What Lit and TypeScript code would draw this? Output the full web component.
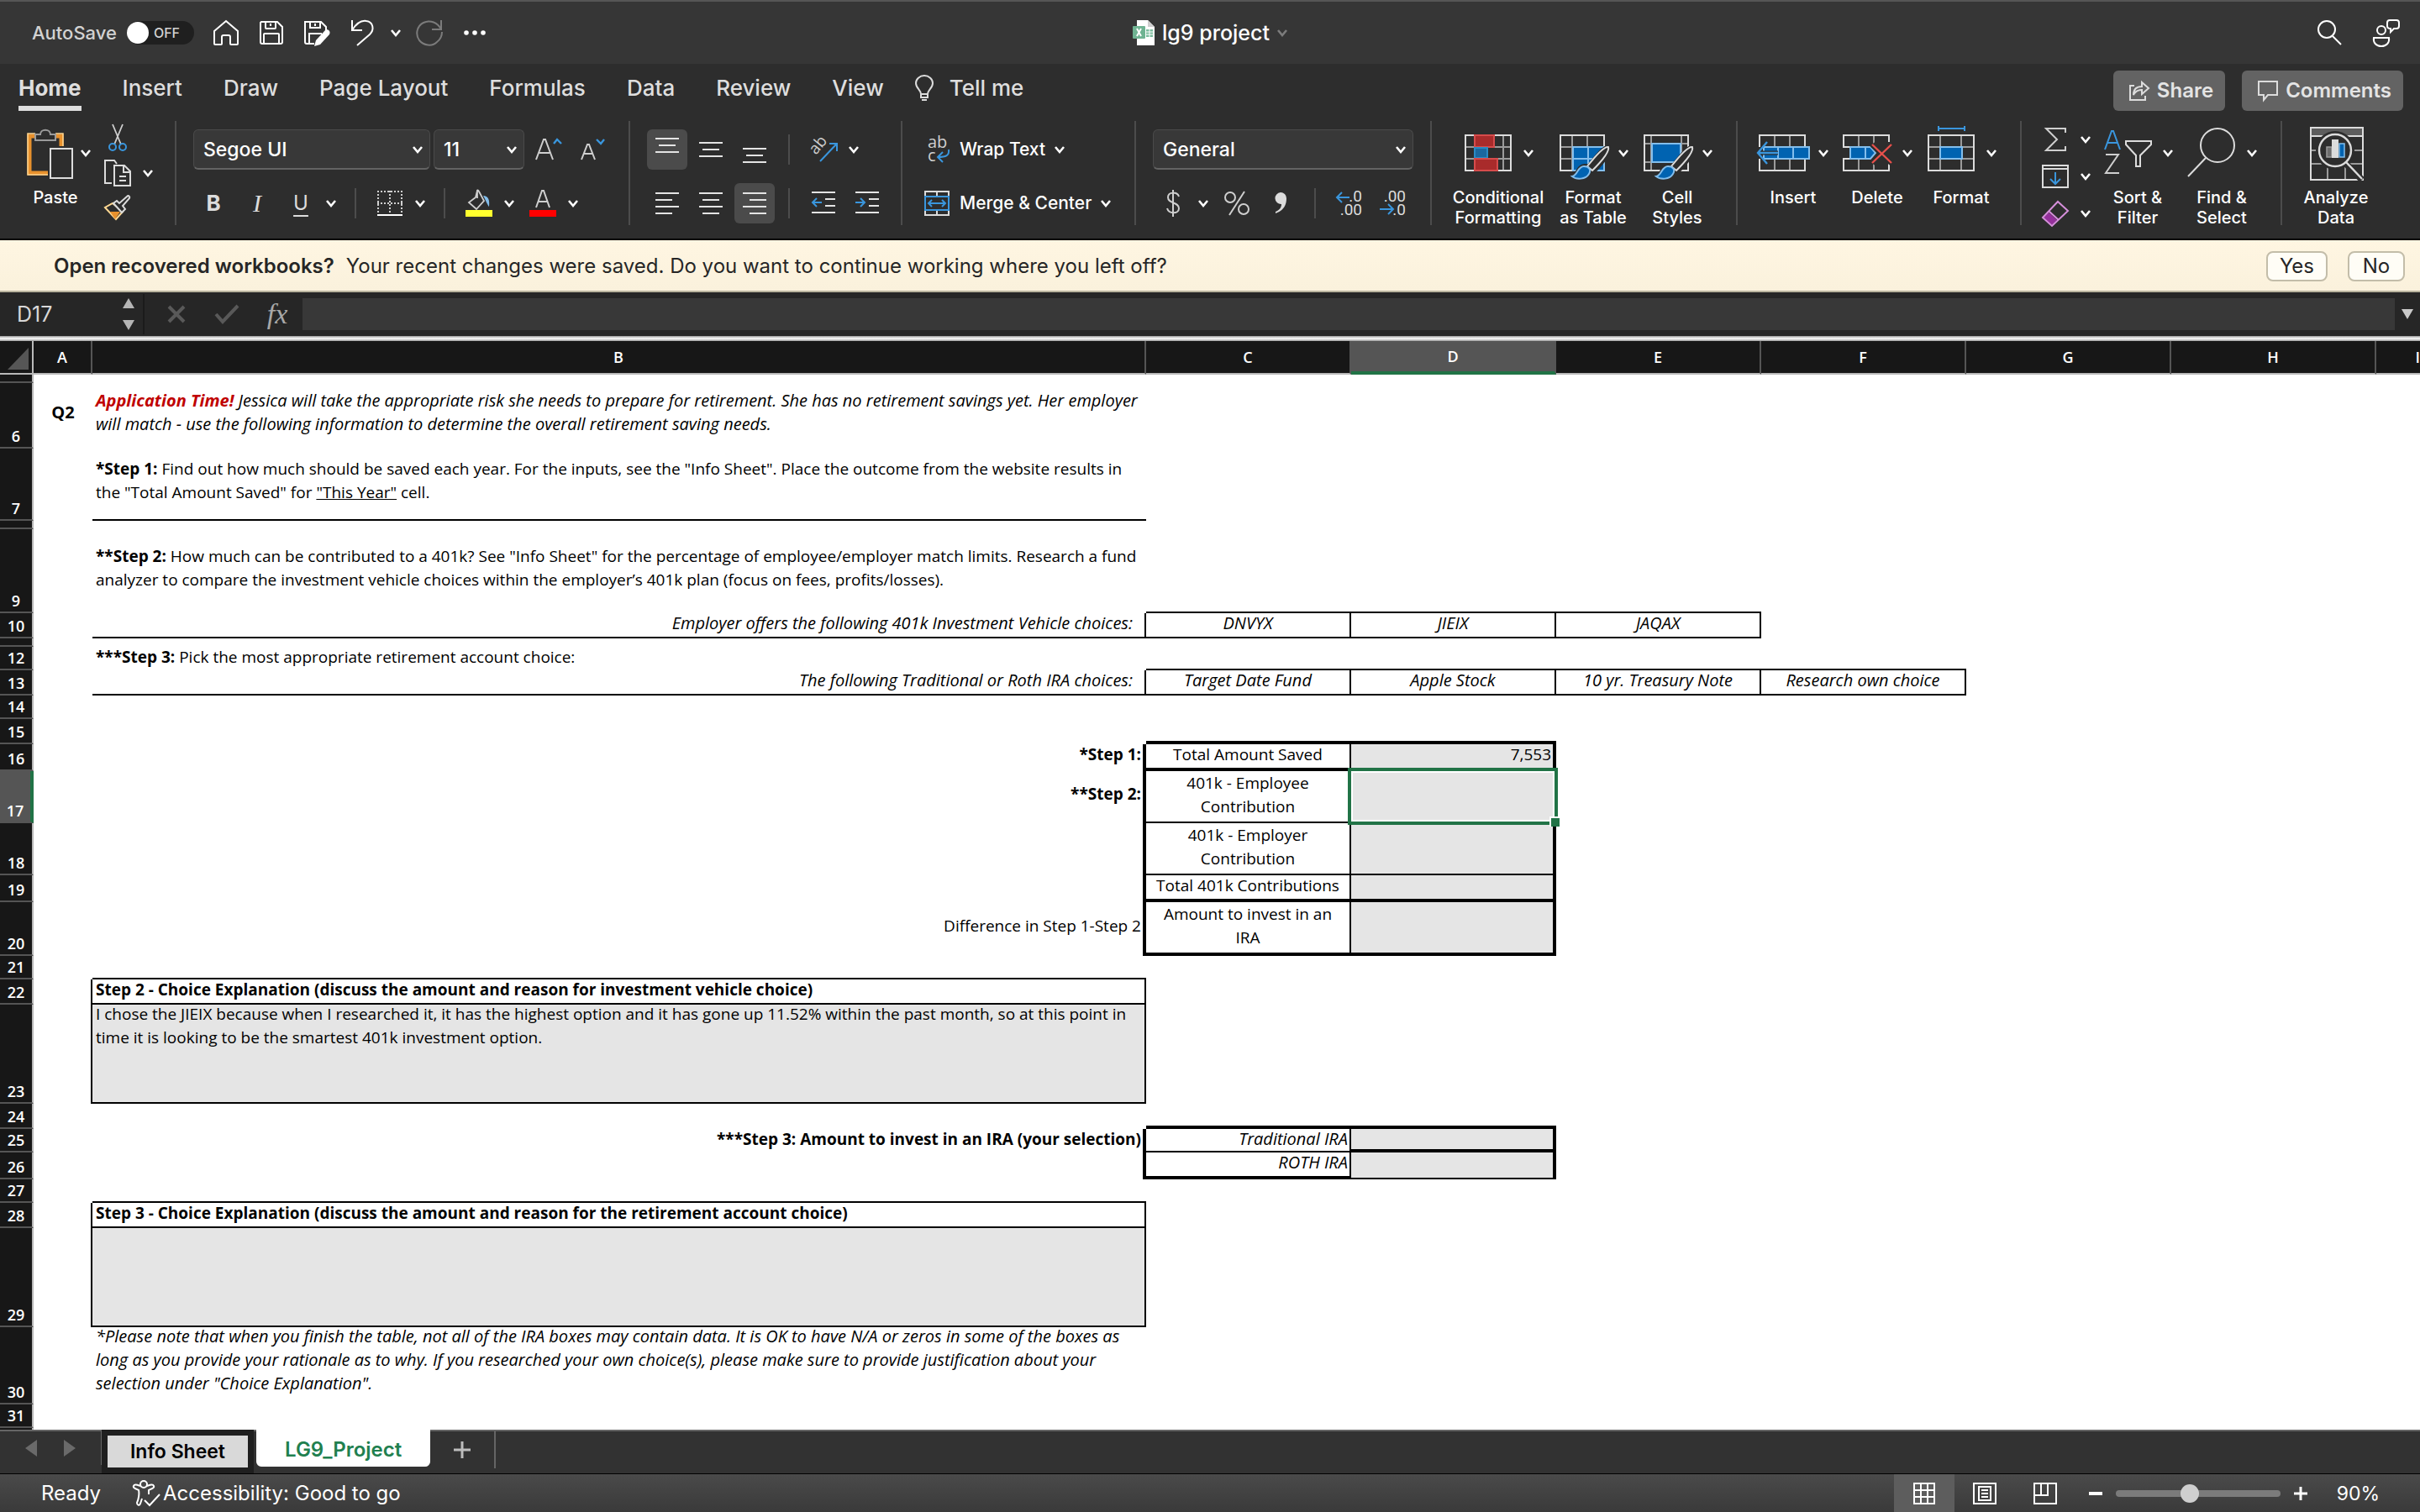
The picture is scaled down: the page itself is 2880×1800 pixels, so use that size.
import { LitElement, html, svg, css, nothing, TemplateResult } from "lit";
import { customElement, state } from "lit/decorators.js";
import { classMap } from "lit/directives/class-map.js";

type Content = TemplateResult | string;
interface Cell {
  cls?: string;
  text?: Content;
  selected?: boolean;
}
interface Row {
  n: string;
  h: number;
  cells?: Record<string, Cell>;
}

const icon = (w: number, h: number, body: unknown) =>
  html`<svg class="icon" width=${w} height=${h} viewBox="0 0 ${w} ${h}" fill="none" aria-hidden="true">${body}</svg>`;

const chevron = icon(14, 10, svg`<path d="M2 2l5 6 5-6" stroke="#fff" stroke-width="2.6"/>`);

const lines = (rows: number[][], h = 32) =>
  icon(32, h, rows.map(([x, y, w]) => svg`<rect x=${x} y=${y} width=${w} height="2" fill="#e4e4e4"/>`));

const grid = svg`
  <path d="M19 11v42M37 11v42M4 25h54M4 39h54" stroke="#9b9b9b" stroke-width="2"/>
  <rect x="5" y="11" width="52" height="42" stroke="#dcdcdc" stroke-width="2"/>`;

const brush = svg`
  <path d="M62 25c-5 0-13 10-24 24l6 6c10-11 22-24 18-30z" fill="#2d2d2d" stroke="#2d2d2d" stroke-width="5"/>
  <path d="M20 60c6 0 6-12 14-12 6 0 8 5 5 10-4 6-14 7-19 2z" fill="#0063b1" stroke="#2d2d2d" stroke-width="6"/>
  <path d="M62 25c-4-1-14 9-25 23l6 5C53 43 64 31 62 25z" fill="#2d2d2d" stroke="#dcdcdc" stroke-width="2"/>
  <path d="M19 60c7-1 6-12 14-12 6 0 9 4 6 9-4 7-15 7-20 3z" fill="#0063b1" stroke="#83beec" stroke-width="2"/>`;

const icons = {
  home: icon(32, 32, svg`<path d="M2 14L16 2l14 12v15a1 1 0 0 1-1 1h-7a1 1 0 0 1-1-1v-8a2 2 0 0 0-2-2h-6a2 2 0 0 0-2 2v8a1 1 0 0 1-1 1H3a1 1 0 0 1-1-1z" stroke="#fff" stroke-width="2"/>`),
  save: icon(32, 32, svg`<path d="M4 3h19l6 6v18a2 2 0 0 1-2 2H5a2 2 0 0 1-2-2V4zM9 3v7a1 1 0 0 0 1 1h10a1 1 0 0 0 1-1V3M7 29V18a1 1 0 0 1 1-1h16a1 1 0 0 1 1 1v11M15 5v3" stroke="#fff" stroke-width="2"/>`),
  saveEdit: icon(34, 34, svg`<path d="M14 30H5a2 2 0 0 1-2-2V4h19l6 6v4M9 4v7h12V4M8 30V18h15M15 6v3" stroke="#fff" stroke-width="2"/><path d="M14 33l2-7L27 14c3-2 7 1 5 5L21 31z" fill="#fff"/>`),
  undo: icon(30, 34, svg`<path d="M3 2v12h12M3 14C8 6 14 2 20 3c8 1 10 10 4 16L9 32" stroke="#fff" stroke-width="2"/>`),
  redo: icon(34, 34, svg`<path d="M31 2v11H20M31 13C27 5 18 1 10 5 2 9 0 19 5 26c5 6 15 8 21 2 4-3 6-8 6-12" stroke="#7b7b7b" stroke-width="2"/>`),
  dots: icon(28, 8, svg`<circle cx="4" cy="4" r="2.8" fill="#fff"/><circle cx="14" cy="4" r="2.8" fill="#fff"/><circle cx="24" cy="4" r="2.8" fill="#fff"/>`),
  workbook: icon(28, 30, svg`<path d="M6 0h13l8 8v22H6z" fill="#fff"/><path d="M19 0v8h8z" fill="#cfcfcf"/><rect x="17" y="11" width="8" height="9" fill="#7cbd9e"/><path d="M21 11v9M17 14h8M17 17h8" stroke="#fff" stroke-width="1"/><rect x="1" y="7" width="15" height="15" rx="1" fill="#6fb392"/><path d="M6 10l5 9M11 10l-5 9" stroke="#fff" stroke-width="2"/>`),
  search: icon(32, 32, svg`<circle cx="13" cy="12" r="10" stroke="#fff" stroke-width="2"/><path d="M20 20l10 10" stroke="#fff" stroke-width="2"/>`),
  person: icon(36, 34, svg`<circle cx="12" cy="14" r="5" stroke="#fff" stroke-width="2"/><path d="M3 23h18c1 6-3 10-9 10s-10-4-9-10zM22 2h8a3 3 0 0 1 3 3v4a3 3 0 0 1-3 3h-3l-4 4v-4c-3 0-4-1-4-3V5a3 3 0 0 1 3-3z" stroke="#fff" stroke-width="2"/>`),
  bulb: icon(24, 32, svg`<path d="M8 23c0-5-6-7-6-13a10 9 0 0 1 20 0c0 6-6 8-6 13v4H8zM8 23h8M9 30h6" stroke="#dcdcdc" stroke-width="2"/>`),
  share: icon(26, 26, svg`<path d="M7 7H2v17h18v-5M6 18c0-7 4-10 10-10V3l8 7-8 7v-5c-5 0-8 2-10 6z" stroke="#dcdcdc" stroke-width="2"/>`),
  comment: icon(26, 26, svg`<path d="M2 2h22v16H13l-5 6v-6H2z" stroke="#dcdcdc" stroke-width="2"/>`),
  paste: icon(64, 64, svg`<path d="M22 12H13v44h22M42 12h9v12" stroke="#e8912d" stroke-width="5"/><path d="M20 9H11v49h24M44 9h9v15" stroke="#ffd892" stroke-width="1.5"/><path d="M20 17V10h6c0-7 12-7 12 0h6v7z" fill="#2d2d2d" stroke="#9b9b9b" stroke-width="2"/><rect x="38" y="27" width="26" height="35" fill="#2d2d2d" stroke="#dcdcdc" stroke-width="2"/>`),
  cut: icon(24, 34, svg`<path d="M6 1l10 24M18 1L8 25" stroke="#cfcfcf" stroke-width="1.8"/><circle cx="6" cy="28" r="4" stroke="#3a96dd" stroke-width="2"/><circle cx="18" cy="28" r="4" stroke="#3a96dd" stroke-width="2"/>`),
  copy: icon(34, 34, svg`<path d="M10 29H2V2h11l3 4M13 8h12l7 7v17H13zM24 8v8h8M19 21h8M19 26h8" stroke="#dcdcdc" stroke-width="2"/>`),
  painter: icon(34, 32, svg`<path d="M2 15l13 14 8-9L11 10z" stroke="#ffd892" stroke-width="2"/><path d="M8 20l12 0-6 9z" fill="#e8912d"/><path d="M12 10l10 11 4-4-3-4 8-9c1-2-1-4-3-2l-9 8-3-3z" fill="#2d2d2d" stroke="#dcdcdc" stroke-width="2"/>`),
  grow: icon(34, 30, svg`<path d="M3 27L12 3h2l9 24M7 19h12" stroke="#cfcfcf" stroke-width="2"/><path d="M24 8l4-5 5 5" stroke="#3a96dd" stroke-width="2.4"/>`),
  shrink: icon(34, 30, svg`<path d="M5 27l7-18h2l7 18M8 20h10" stroke="#cfcfcf" stroke-width="2"/><path d="M23 3l5 5 4-5" stroke="#3a96dd" stroke-width="2.4"/>`),
  borders: icon(32, 32, svg`<path d="M1 2h30M1 16h30M2 1v28M16 1v28M30 1v28" stroke="#cfcfcf" stroke-width="2" stroke-dasharray="2 2"/><path d="M1 30h30" stroke="#fff" stroke-width="2"/>`),
  fill: icon(34, 34, svg`<path d="M15 2l-2 8-8 6 9 8 9-10-6-11c-1-2-2-2-2-1v9" stroke="#cfcfcf" stroke-width="1.8"/><path d="M22 8c6 0 8 5 7 13-2-2-3-6-7-13z" fill="#83beec"/><rect x="1" y="25" width="32" height="8" fill="#ffff2e"/>`),
  fontColor: icon(34, 34, svg`<path d="M9 22l7-20h2l7 20M12 15h10" stroke="#cfcfcf" stroke-width="2"/><rect x="1" y="25" width="32" height="8" fill="#f00"/>`),
  alignTop: lines([[2, 2, 28], [6, 10, 20], [2, 18, 28]]),
  alignMiddle: lines([[2, 7, 28], [6, 15, 20], [2, 23, 28]]),
  alignBottom: lines([[2, 14, 28], [6, 22, 20], [2, 30, 28]]),
  alignLeft: lines([[2, 3, 28], [2, 11, 20], [2, 19, 28], [2, 27, 20]]),
  alignCenter: lines([[2, 3, 28], [6, 11, 20], [2, 19, 28], [6, 27, 20]]),
  alignRight: lines([[2, 3, 28], [10, 11, 20], [2, 19, 28], [10, 27, 20]]),
  orient: icon(36, 34, svg`<text x="0" y="0" transform="translate(9 24) rotate(-50)" font-family="Open Sans, sans-serif" font-size="19" fill="#cfcfcf">ab</text><path d="M14 31L33 11M25 10h9v9" stroke="#3a96dd" stroke-width="2"/>`),
  outdent: icon(32, 32, svg`<path d="M2 3h28M18 11h12M18 19h12M2 27h28" stroke="#e4e4e4" stroke-width="2"/><path d="M14 15H3M8 10l-5 5 5 5" stroke="#3a96dd" stroke-width="2"/>`),
  indent: icon(32, 32, svg`<path d="M2 3h28M18 11h12M18 19h12M2 27h28" stroke="#e4e4e4" stroke-width="2"/><path d="M2 15h11M8 10l5 5-5 5" stroke="#3a96dd" stroke-width="2"/>`),
  wrap: icon(30, 34, svg`<text x="3" y="15" font-family="Open Sans, sans-serif" font-size="20" fill="#cfcfcf">ab</text><text x="3" y="31" font-family="Open Sans, sans-serif" font-size="20" fill="#cfcfcf">c</text><path d="M28 17c1 7-3 9-13 9M21 20l-6 6 6 6" stroke="#3a96dd" stroke-width="2"/>`),
  merge: icon(32, 32, svg`<path d="M1 8V2h28v6M1 24v6h28v-6M15 2v6M15 24v6" stroke="#dcdcdc" stroke-width="2"/><rect x="1" y="8" width="28" height="16" stroke="#3a96dd" stroke-width="2"/><path d="M5 16h20M9 12l-4 4 4 4M21 12l4 4-4 4" stroke="#3a96dd" stroke-width="2"/>`),
  incDec: icon(34, 34, svg`<text x="32" y="15" text-anchor="end" font-family="Roboto, sans-serif" font-size="19" fill="#dcdcdc">.0</text><text x="32" y="31" text-anchor="end" font-family="Roboto, sans-serif" font-size="19" fill="#dcdcdc">.00</text><path d="M17 10H2M8 4l-6 6 6 6" stroke="#3a96dd" stroke-width="2"/>`),
  decDec: icon(34, 34, svg`<text x="32" y="15" text-anchor="end" font-family="Roboto, sans-serif" font-size="19" fill="#dcdcdc">.00</text><text x="32" y="31" text-anchor="end" font-family="Roboto, sans-serif" font-size="19" fill="#dcdcdc">.0</text><path d="M1 24h16M11 18l6 6-6 6" stroke="#3a96dd" stroke-width="2"/>`),
  dollar: icon(20, 34, svg`<path d="M17 9c-2-6-13-6-13 1 0 8 13 5 13 13 0 7-12 7-14 0M10 1v32" stroke="#cfcfcf" stroke-width="2"/>`),
  percent: icon(34, 34, svg`<circle cx="9" cy="10" r="6" stroke="#cfcfcf" stroke-width="2"/><circle cx="25" cy="24" r="6" stroke="#cfcfcf" stroke-width="2"/><path d="M26 3L8 31" stroke="#cfcfcf" stroke-width="2"/>`),
  comma: icon(18, 30, svg`<path d="M9 2a7 7 0 0 1 7 7c0 10-5 15-13 18v-2c5-2 7-5 7-9a7 7 0 1 1-1-14z" fill="#dcdcdc"/>`),
  conditional: icon(64, 64, svg`<path d="M17 11v42M50 11v42M5 25h54M5 39h54" stroke="#9b9b9b" stroke-width="2"/><rect x="5" y="11" width="54" height="42" stroke="#dcdcdc" stroke-width="2"/><rect x="16" y="11" width="23" height="14" fill="#a92b2b" stroke="#d64b4b" stroke-width="2"/><rect x="16" y="26" width="15" height="12" fill="#1b689f" stroke="#2a8ac4" stroke-width="2"/><rect x="16" y="39" width="27" height="14" fill="#a92b2b" stroke="#d64b4b" stroke-width="2"/>`),
  formatTable: icon(66, 64, svg`${grid}<path d="M20 25h37v28H20z" fill="#0063b1" stroke="#83beec" stroke-width="2"/><path d="M38 25v28M20 39h37" stroke="#83beec" stroke-width="2"/>${brush}`),
  cellStyles: icon(66, 64, svg`<path d="M13 11v42M49 11v42M5 21h52M5 43h52" stroke="#9b9b9b" stroke-width="2"/><rect x="5" y="11" width="52" height="42" stroke="#dcdcdc" stroke-width="2"/><rect x="14" y="21" width="34" height="22" fill="#0063b1" stroke="#83beec" stroke-width="2"/>${brush}`),
  insert: icon(66, 64, svg`<path d="M22 11v42M40 11v42" stroke="#9b9b9b" stroke-width="2"/><path d="M4 25V11h54v14M4 39v14h54V39" stroke="#dcdcdc" stroke-width="2"/><rect x="9" y="25" width="54" height="14" fill="#0063b1" stroke="#83beec" stroke-width="2"/><path d="M26 25v14M44 25v14" stroke="#83beec" stroke-width="2"/><path d="M26 32H8" stroke="#2d2d2d" stroke-width="5"/><path d="M26 32H2M13 19L2 32l11 13" stroke="#3a96dd" stroke-width="2.4"/>`),
  delete: icon(66, 64, svg`<path d="M22 11v14M40 11v10M22 39v14M40 43v10" stroke="#9b9b9b" stroke-width="2"/><path d="M12 25H4V11h54v8M12 39H4v14h54v-8" stroke="#dcdcdc" stroke-width="2"/><path d="M12 25h24l6 7-6 7H12z" fill="#0063b1" stroke="#83beec" stroke-width="2"/><path d="M30 25v14" stroke="#83beec" stroke-width="2"/><path d="M38 22l23 22M61 22L38 44" stroke="#2d2d2d" stroke-width="7"/><path d="M38 22l23 22M61 22L38 44" stroke="#e8504b" stroke-width="2.4"/>`),
  format: icon(64, 64, svg`<path d="M19 11v42M44 11v42M5 25h54M5 39h54" stroke="#9b9b9b" stroke-width="2"/><rect x="5" y="11" width="54" height="42" stroke="#dcdcdc" stroke-width="2"/><rect x="19" y="25" width="26" height="14" fill="#0063b1" stroke="#83beec" stroke-width="2"/><path d="M17 3h31M17 0v6M48 0v6" stroke="#3a96dd" stroke-width="2"/>`),
  sum: icon(32, 32, svg`<path d="M28 8V3H5l13 13L5 29h23v-5" stroke="#cfcfcf" stroke-width="2"/>`),
  fillDown: icon(34, 32, svg`<rect x="2" y="3" width="30" height="26" stroke="#dcdcdc" stroke-width="2"/><path d="M2 7h30" stroke="#dcdcdc" stroke-width="2"/><path d="M17 11v14M11 19l6 6 6-6" stroke="#3a96dd" stroke-width="2"/>`),
  eraser: icon(34, 34, svg`<path d="M9 16l10 9-6 6L3 22z" fill="#95309c"/><path d="M20 3l12 11-19 18L2 22zM9 14l12 11" stroke="#d68fdb" stroke-width="2"/>`),
  sort: icon(60, 58, svg`<path d="M3 25l8-22h2l8 22M6 17h12" stroke="#3a96dd" stroke-width="2"/><path d="M4 31h15L4 53h16" stroke="#cfcfcf" stroke-width="2"/><path d="M28 15h30v4L45 32v13h-5V32L28 19z" stroke="#dcdcdc" stroke-width="2"/>`),
  find: icon(62, 62, svg`<circle cx="38" cy="22" r="20" stroke="#dcdcdc" stroke-width="2"/><path d="M24 37L3 59" stroke="#dcdcdc" stroke-width="2"/>`),
  analyze: icon(66, 66, svg`<rect x="2" y="2" width="62" height="10" fill="#5d5d5d"/><path d="M2 29h62M2 45h62M22 12v52M43 12v52" stroke="#9b9b9b" stroke-width="2"/><rect x="2" y="2" width="62" height="62" stroke="#dcdcdc" stroke-width="2"/><path d="M2 12h62" stroke="#dcdcdc" stroke-width="2"/><circle cx="31" cy="29" r="23" fill="#2d2d2d"/><path d="M44 45l19 19" stroke="#2d2d2d" stroke-width="8"/><circle cx="31" cy="29" r="19" fill="#2d2d2d" stroke="#dcdcdc" stroke-width="2.4"/><path d="M44 43l19 20" stroke="#dcdcdc" stroke-width="2.4"/><rect x="21" y="25" width="6" height="12" fill="#6d6d6d" stroke="#9b9b9b" stroke-width="1.5"/><rect x="27" y="16" width="8" height="22" fill="#dcdcdc"/><rect x="36" y="21" width="6" height="16" fill="#0063b1" stroke="#83beec" stroke-width="1.5"/>`),
  cancel: icon(24, 24, svg`<path d="M3 3l18 18M21 3L3 21" stroke="#595959" stroke-width="4"/>`),
  enter: icon(30, 24, svg`<path d="M2 12l8 9L28 2" stroke="#595959" stroke-width="4"/>`),
  access: icon(34, 34, svg`<circle cx="14" cy="6" r="4" stroke="#fff" stroke-width="2"/><path d="M10 8c-3-1-7-3-8 0-1 2 2 3 6 5 1 4 0 11-2 15 0 3 3 4 4 1l2-6M18 8c3-1 7-3 8 0 1 2-2 3-6 5v5M15 25l6 6L33 18" stroke="#fff" stroke-width="2"/>`),
  viewGrid: icon(28, 28, svg`<path d="M2 2h24v24H2zM2 10h24M2 18h24M10 2v24M18 2v24" stroke="#fff" stroke-width="2"/>`),
  viewPage: icon(30, 28, svg`<path d="M2 2h26v24H2zM8 6h14v16H8zM11 10h8M11 14h8M11 18h8" stroke="#fff" stroke-width="2"/>`),
  viewBreak: icon(30, 28, svg`<path d="M2 2h26v24H2zM2 16h16V2M10 2v14" stroke="#fff" stroke-width="2"/>`),
};

const rows: Row[] = [
  { n: "", h: 10 },
  {
    n: "6", h: 78,
    cells: {
      A: { cls: "mid center bold q", text: "Q2" },
      B: { cls: "mid multi italic", text: html`<b class="red">Application Time!</b> Jessica will take the appropriate risk she needs to prepare for retirement. She has no retirement savings yet. Her employer<br />will match - use the following information to determine the overall retirement saving needs.` },
    },
  },
  { n: "7", h: 86, cells: { B: { cls: "mid multi b2", text: html`<b>*Step 1:</b> Find out how much should be saved each year. For the inputs, see the "Info Sheet". Place the outcome from the website results in<br />the "Total Amount Saved" for <u>"This Year"</u> cell.` } } },
  { n: "", h: 10 },
  { n: "9", h: 100, cells: { B: { cls: "mid multi", text: html`<b>**Step 2:</b> How much can be contributed to a 401k? See "Info Sheet" for the percentage of employee/employer match limits. Research a fund<br />analyzer to compare the investment vehicle choices within the employer’s 401k plan (focus on fees, profits/losses).` }, C: { cls: "b2" }, D: { cls: "b2" }, E: { cls: "b2" } } },
  { n: "10", h: 30, cells: { B: { cls: "right inset italic b2 r2", text: "Employer offers the following 401k Investment Vehicle choices:" }, C: { cls: "center italic b2 r2", text: "DNVYX" }, D: { cls: "center italic b2 r2", text: "JIEIX" }, E: { cls: "center italic b2 r2", text: "JAQAX" } } },
  { n: "", h: 10 },
  { n: "12", h: 28, cells: { B: { text: html`<b>***Step 3:</b> Pick the most appropriate retirement account choice:` }, C: { cls: "b2" }, D: { cls: "b2" }, E: { cls: "b2" }, F: { cls: "b2" } } },
  { n: "13", h: 30, cells: { B: { cls: "right inset italic b2 r2", text: "The following Traditional or Roth IRA choices:" }, C: { cls: "center italic b2 r2", text: "Target Date Fund" }, D: { cls: "center italic b2 r2", text: "Apple Stock" }, E: { cls: "center italic b2 r2", text: "10 yr. Treasury Note" }, F: { cls: "center italic b2 r2", text: "Research own choice" } } },
  { n: "14", h: 28 },
  { n: "15", h: 30, cells: { C: { cls: "b4" }, D: { cls: "b4" } } },
  { n: "16", h: 32, cells: { B: { cls: "right bold r4", text: "*Step 1:" }, C: { cls: "center b4 r2", text: "Total Amount Saved" }, D: { cls: "right gray b4 r4", text: "7,553" } } },
  { n: "17", h: 62, cells: { B: { cls: "mid right bold r4", text: "**Step 2:" }, C: { cls: "center multi b2 r2", text: html`401k - Employee<br />Contribution` }, D: { cls: "gray b2 r4", selected: true } } },
  { n: "18", h: 62, cells: { B: { cls: "r4" }, C: { cls: "center multi b2 r2", text: html`401k - Employer<br />Contribution` }, D: { cls: "gray b2 r4" } } },
  { n: "19", h: 32, cells: { B: { cls: "r4" }, C: { cls: "center b4 r2", text: "Total 401k Contributions" }, D: { cls: "gray b4 r4" } } },
  { n: "20", h: 64, cells: { B: { cls: "mid right r4", text: "Difference in Step 1-Step 2" }, C: { cls: "center multi b4 r2", text: html`Amount to invest in an<br />IRA` }, D: { cls: "gray b4 r4" } } },
  { n: "21", h: 28, cells: { B: { cls: "b2" } } },
  { n: "22", h: 30, cells: { A: { cls: "r2" }, B: { cls: "bold b2 r2", text: "Step 2 - Choice Explanation (discuss the amount and reason for investment vehicle choice)" } } },
  { n: "23", h: 118, cells: { A: { cls: "r2" }, B: { cls: "multi gray b2 r2", text: html`<div class="tight">I chose the JIEIX because when I researched it, it has the highest option and it has gone up 11.52% within the past month, so at this point in<br />time it is looking to be the smartest 401k investment option.</div>` } } },
  { n: "24", h: 30, cells: { C: { cls: "b4" }, D: { cls: "b4" } } },
  { n: "25", h: 28, cells: { B: { cls: "right bold r4", text: "***Step 3: Amount to invest in an IRA (your selection)" }, C: { cls: "right italic b2 r2", text: "Traditional IRA" }, D: { cls: "gray b4 r4" } } },
  { n: "26", h: 32, cells: { B: { cls: "r4" }, C: { cls: "right italic b4 r2", text: "ROTH IRA" }, D: { cls: "gray b2 r4" } } },
  { n: "27", h: 28, cells: { B: { cls: "b2" } } },
  { n: "28", h: 30, cells: { A: { cls: "r2" }, B: { cls: "bold b2 r2", text: "Step 3 - Choice Explanation (discuss the amount and reason for the retirement account choice)" } } },
  { n: "29", h: 118, cells: { A: { cls: "r2" }, B: { cls: "gray b2 r2" } } },
  { n: "30", h: 92, cells: { B: { cls: "multi italic", text: html`<div class="tight">*Please note that when you finish the table, not all of the IRA boxes may contain data. It is OK to have N/A or zeros in some of the boxes as<br />long as you provide your rationale as to why. If you researched your own choice(s), please make sure to provide justification about your<br />selection under "Choice Explanation".</div>` } } },
  { n: "31", h: 28 },
  { n: "", h: 10 },
];

const columns = ["A", "B", "C", "D", "E", "F", "G", "H", "I"];
const widths = [70, 1254, 244, 244, 244, 244, 244, 244];

@customElement("app-root")
export class AppRoot extends LitElement {
  @state() private zoom = 90;

  static styles = css`
    :host {
      display: flex;
      flex-direction: column;
      height: 100vh;
      overflow: hidden;
      background: #fff;
      color: #e6e6e6;
      font-family: Inter, "Liberation Sans", sans-serif;
      font-size: 24px;
      line-height: 28px;
    }
    * { box-sizing: border-box; }
    button, input, select { font: inherit; color: inherit; border: 0; margin: 0; padding: 0; background: none; border-radius: 0; }
    .icon { display: block; flex: none; overflow: visible; }
    header { flex: none; }

    .titlebar { display: grid; grid-template-columns: 1fr auto 1fr; align-items: center; height: 76px; padding: 0 18px; background: #363636; border-top: 2px solid #565656; }
    .quick { display: flex; align-items: center; gap: 10px; padding-left: 20px; }
    .quick button, .account button { display: grid; place-items: center; width: 44px; height: 44px; }
    .quick .more { width: 16px; }
    .autosave { display: flex; align-items: center; gap: 12px; margin-right: 6px; font-size: 22px; font-weight: 500; color: #d2d2d2; }
    .switch { display: flex; align-items: center; width: 80px; height: 28px; border-radius: 14px; background: #1f1f1f; font-size: 16px; gap: 6px; }
    .switch input { appearance: none; width: 26px; height: 26px; border-radius: 13px; background: #fff; }
    .name { display: flex; align-items: center; gap: 8px; color: #fff; font-size: 25px; font-weight: 500; }
    .name .dim { opacity: 0.35; }
    .account { display: flex; justify-content: flex-end; gap: 24px; }

    .menu { display: flex; align-items: flex-start; height: 68px; padding: 8px 20px 0 22px; background: #2d2d2d; }
    .menu nav { display: flex; gap: 49px; }
    .menu nav button { height: 48px; padding-bottom: 6px; font-size: 26px; font-weight: 500; color: #dedede; white-space: nowrap; }
    .menu nav .active { font-weight: 700; border-bottom: 6px solid #dedede; padding-bottom: 0; }
    .tell { display: flex; align-items: center; gap: 18px; height: 48px; padding-bottom: 6px; margin-left: 36px; font-size: 26px; font-weight: 500; color: #dedede; }
    .collab { display: flex; gap: 20px; margin-left: auto; }
    .collab button { display: flex; align-items: center; gap: 8px; height: 48px; padding: 0 14px 0 18px; border-radius: 6px; background: #636363; font-size: 24px; font-weight: 600; color: #e4e4e4; }

    .ribbon { display: flex; height: 142px; background: #2d2d2d; border-bottom: 2px solid #000; }
    .group { display: flex; height: 124px; flex: none; padding: 0 20px; border-right: 2px solid #4c4c4c; color: #fff; }
    .group.wide { padding: 0 20px 0 16px; }
    .group.snug { padding: 0 16px 0 20px; }
    .group.cells { width: 278px; }
    .group:last-child { border-right: 0; }
    .rows { display: flex; flex-direction: column; gap: 16px; padding-top: 10px; }
    .line { display: flex; align-items: center; gap: 4px; height: 48px; }
    .split { display: flex; align-items: center; }
    .tool { display: grid; place-items: center; width: 48px; height: 48px; border-radius: 6px; color: #dcdcdc; }
    .tool.on { background: #4b4b4b; }
    .drop { display: grid; place-items: center; width: 24px; height: 44px; }
    .rule { width: 2px; height: 36px; margin: 0 12px; background: #4c4c4c; }
    .labelled { display: flex; align-items: center; gap: 10px; height: 48px; font-size: 21px; font-weight: 500; color: #fff; white-space: nowrap; }
    .labelled .slot { display: grid; place-items: center; width: 44px; margin-right: -6px; }
    .combo { display: grid; align-items: center; height: 48px; border: 1px solid #4a4a4a; border-bottom: 2px solid #636363; border-radius: 6px; background: #383838; }
    .combo > * { grid-area: 1 / 1; }
    .combo select { appearance: none; height: 44px; padding-left: 11px; font-size: 23px; font-weight: 500; color: #fff; }
    .combo .icon { justify-self: end; margin-right: 7px; pointer-events: none; }
    .face { width: 282px; }
    .size { width: 108px; }
    .number { width: 310px; }
    .serif { font-family: "Liberation Serif", serif; font-style: italic; font-size: 30px; }
    .b { font-weight: 700; font-size: 26px; }
    .u { text-decoration: underline; text-underline-offset: 6px; text-decoration-thickness: 2px; }
    .big { display: flex; flex-direction: column; align-items: center; width: 100px; height: 124px; padding-top: 6px; font-size: 20px; font-weight: 500; line-height: 24px; color: #fff; gap: 9px; }
    .big.first { width: 126px; }
    .big.last { width: 96px; }
    .big .art { display: flex; align-items: center; gap: 8px; height: 64px; }
    .big .pic { display: grid; place-items: center; width: 64px; height: 64px; }
    .big .tick { display: grid; place-items: center; width: 16px; }
    .stack { display: flex; flex-direction: column; }
    .stack .tool { height: 44px; }

    .notice { display: flex; flex: none; align-items: center; height: 62px; padding: 2px 18px 0 64px; gap: 14px; background: linear-gradient(#fff6e2, #faf1dc); border-bottom: 2px solid #b9b49f; color: #262626; font-size: 24px; }
    .notice b { font-weight: 600; }
    .notice .answers { display: flex; gap: 24px; margin-left: auto; }
    .notice button { height: 36px; min-width: 68px; padding: 0 14px; border: 2px solid #c3bda9; border-radius: 8px; background: #fffdf6; font-size: 24px; line-height: 28px; }

    .formula { display: flex; flex: none; align-items: center; height: 52px; background: #262626; }
    .namebox { display: flex; align-items: center; width: 172px; height: 48px; border-right: 2px solid #1b1b1b; padding: 0 10px 0 20px; }
    .namebox input { width: 100px; min-width: 0; flex: 1; font-size: 25px; color: #d8d8d8; }
    .formula .tools { display: flex; padding-left: 8px; }
    .formula .tools button { display: grid; place-items: center; width: 60px; height: 48px; }
    .formula .fx { font-size: 34px; color: #a8a8a8; }
    .entry { flex: 1; min-width: 0; height: 38px; padding: 0 8px; background: #383838; color: #fff; }
    .expand { display: grid; place-items: center; width: 30px; }
    .band { flex: none; height: 6px; background: linear-gradient(#9a9a9a, #fff 50%, #9a9a9a); }

    .sheet { flex: 1; min-height: 0; overflow: hidden; font-family: "Open Sans", "Noto Sans", sans-serif; font-size: 19px; color: #000; }
    table { width: 100%; table-layout: fixed; border-collapse: separate; border-spacing: 0; }
    thead th { height: 40px; padding: 0; background: #171717; color: #fff; font-size: 18px; font-weight: 600; line-height: 24px; border-right: 2px solid #555; border-bottom: 2px solid #b9b9b9; }
    thead th:first-child { border-right-color: #b9b9b9; }
    thead th.on { background: #555; border-bottom: 4px solid #217346; border-right-color: #555; }
    thead th:last-child { border-right: 0; text-align: right; }
    .corner { display: block; margin: 4px 0 0 9px; }
    tbody th { padding: 0; background: #171717; color: #fff; font-size: 18px; font-weight: 600; line-height: 26px; vertical-align: bottom; border-right: 2px solid #b9b9b9; border-bottom: 2px solid #555; }
    tbody th.on { background: #555; border-right: 4px solid #217346; border-bottom-color: #555; }
    td { position: relative; padding: 0 2px 0 4px; vertical-align: top; line-height: 24px; white-space: nowrap; border: 0 solid #000; }
    .multi { line-height: 28px; }
    .mid { vertical-align: middle; padding-bottom: 8px; }
    .center { text-align: center; padding-left: 2px; }
    .right { text-align: right; }
    .inset { padding-right: 14px; }
    .bold, b { font-weight: 700; }
    .italic { font-style: italic; font-size: 20px; }
    .q { font-size: 20px; }
    .red { color: #c00000; }
    .gray { background: #e5e5e5; }
    .b2 { border-bottom-width: 2px; }
    .b4 { border-bottom-width: 4px; }
    .r2 { border-right-width: 2px; }
    .r4 { border-right-width: 4px; }
    .tight { margin-top: -3px; }
    .cursor { position: absolute; inset: -4px -6px -4px -4px; border: 4px solid #217346; box-shadow: inset 0 0 0 2px #fff; z-index: 1; }
    .cursor::after { content: ""; position: absolute; right: -6px; bottom: -6px; width: 10px; height: 10px; background: #217346; border: solid #fff; border-width: 2px 0 0 2px; box-sizing: content-box; }

    .tabs { display: flex; flex: none; height: 52px; background: #323232; border-top: 2px solid #656565; }
    .arrows { display: flex; align-items: center; gap: 32px; width: 122px; height: 40px; padding-left: 30px; border-right: 2px solid #656565; }
    .tab { font-size: 23px; font-weight: 600; }
    .info { height: 42px; margin: 3px 8px 0 4px; padding: 0 27px; border: 2px solid #1f1f1f; background: #d9d9d9; color: #000; outline: 5px solid #1f1f1f; }
    .current { position: relative; height: 44px; margin-top: -2px; padding: 4px 34px 0; background: #fff; color: #21804f; border-radius: 0 0 6px 6px; font-size: 24px; }
    .add { display: grid; place-items: center; width: 78px; height: 44px; border-right: 2px solid #656565; }

    footer { display: flex; flex: none; align-items: center; height: 46px; border-top: 1px solid #000; background: linear-gradient(#4a4a4a, #3a3a3a); padding: 0 48px 0 49px; font-size: 24px; color: #fff; }
    .state { width: 108px; }
    .access { display: flex; align-items: center; gap: 3px; }
    .views { display: flex; margin-left: auto; height: 46px; }
    .views button { display: grid; place-items: center; width: 72px; height: 46px; }
    .views .on { background: #5d5d5d; }
    .zoom { display: flex; align-items: center; gap: 16px; margin-left: 16px; }
    .zoom input { appearance: none; width: 196px; height: 8px; border-radius: 4px; background: #7b7b7b; }
    .zoom input::-webkit-slider-thumb { appearance: none; width: 22px; height: 22px; border-radius: 11px; background: #cfcfcf; }
    .percent { width: 86px; text-align: right; font-size: 23px; }
  `;

  private tool(name: string, glyph: Content, cls = "") {
    return html`<button class="tool ${cls}" aria-label=${name}>${glyph}</button>`;
  }

  private split(name: string, glyph: Content, cls = "") {
    return html`<div class="split">${this.tool(name, glyph, cls)}<button class="drop" aria-label="${name} options">${chevron}</button></div>`;
  }

  private big(pic: Content, label: Content, cls = "", menu = true) {
    return html`<button class="big ${cls}"><span class="art"><span class="pic">${pic}</span>${menu ? html`<span class="tick">${chevron}</span>` : nothing}</span><span>${label}</span></button>`;
  }

  private renderTitle() {
    return html`<div class="titlebar">
      <div class="quick">
        <label class="autosave">AutoSave<span class="switch"><input type="checkbox" role="switch" aria-label="AutoSave" />OFF</span></label>
        <button aria-label="Home">${icons.home}</button>
        <button aria-label="Save">${icons.save}</button>
        <button aria-label="Save as">${icons.saveEdit}</button>
        <button aria-label="Undo">${icons.undo}</button>
        <button class="more" aria-label="Undo history">${chevron}</button>
        <button aria-label="Redo">${icons.redo}</button>
        <button aria-label="More">${icons.dots}</button>
      </div>
      <div class="name">${icons.workbook}<span>lg9 project</span><span class="dim">${chevron}</span></div>
      <div class="account"><button aria-label="Search">${icons.search}</button><button aria-label="Account">${icons.person}</button></div>
    </div>`;
  }

  private renderMenu() {
    const names = ["Home", "Insert", "Draw", "Page Layout", "Formulas", "Data", "Review", "View"];
    return html`<div class="menu">
      <nav>${names.map((n, i) => html`<button class=${classMap({ active: i === 0 })}>${n}</button>`)}</nav>
      <button class="tell">${icons.bulb}Tell me</button>
      <div class="collab"><button>${icons.share}Share</button><button>${icons.comment}Comments</button></div>
    </div>`;
  }

  private renderRibbon() {
    return html`<div class="ribbon">
      <div class="group wide">
        ${this.big(icons.paste, "Paste")}
        <div class="stack">${this.tool("Cut", icons.cut)}${this.split("Copy", icons.copy)}${this.tool("Format Painter", icons.painter)}</div>
      </div>
      <div class="group">
        <div class="rows">
          <div class="line">
            <span class="combo face"><select aria-label="Font"><option>Segoe UI</option></select>${chevron}</span>
            <span class="combo size"><select aria-label="Font size"><option>11</option></select>${chevron}</span>
            ${this.tool("Increase font size", icons.grow)}${this.tool("Decrease font size", icons.shrink)}
          </div>
          <div class="line">
            ${this.tool("Bold", html`<span class="b">B</span>`)}${this.tool("Italic", html`<span class="serif">I</span>`)}
            ${this.split("Underline", html`<span class="u">U</span>`)}<span class="rule"></span>
            ${this.split("Borders", icons.borders)}<span class="rule"></span>
            ${this.split("Fill colour", icons.fill)}${this.split("Font colour", icons.fontColor)}
          </div>
        </div>
      </div>
      <div class="group snug">
        <div class="rows">
          <div class="line">
            ${this.tool("Top align", icons.alignTop, "on")}${this.tool("Middle align", icons.alignMiddle)}${this.tool("Bottom align", icons.alignBottom)}<span class="rule"></span>${this.split("Orientation", icons.orient)}
          </div>
          <div class="line">
            ${this.tool("Align left", icons.alignLeft)}${this.tool("Center", icons.alignCenter)}${this.tool("Align right", icons.alignRight, "on")}<span class="rule"></span>${this.tool("Decrease indent", icons.outdent)}${this.tool("Increase indent", icons.indent)}
          </div>
        </div>
      </div>
      <div class="group cells">
        <div class="rows">
          <button class="labelled"><span class="slot">${icons.wrap}</span>Wrap Text${chevron}</button>
          <button class="labelled"><span class="slot">${icons.merge}</span>Merge &amp; Center${chevron}</button>
        </div>
      </div>
      <div class="group">
        <div class="rows">
          <div class="line"><span class="combo number"><select aria-label="Number format"><option>General</option></select>${chevron}</span></div>
          <div class="line">
            ${this.split("Currency", icons.dollar)}${this.tool("Percent", icons.percent)}${this.tool("Comma style", icons.comma)}<span class="rule"></span>${this.tool("Increase decimal", icons.incDec)}${this.tool("Decrease decimal", icons.decDec)}
          </div>
        </div>
      </div>
      <div class="group wide">
        ${this.big(icons.conditional, html`Conditional<br />Formatting`, "first")}
        ${this.big(icons.formatTable, html`Format<br />as Table`)}
        ${this.big(icons.cellStyles, html`Cell<br />Styles`)}
      </div>
      <div class="group wide">${this.big(icons.insert, "Insert")}${this.big(icons.delete, "Delete")}${this.big(icons.format, "Format")}</div>
      <div class="group wide">
        <div class="stack">${this.split("AutoSum", icons.sum)}${this.split("Fill", icons.fillDown)}${this.split("Clear", icons.eraser)}</div>
        ${this.big(icons.sort, html`Sort &amp;<br />Filter`)}${this.big(icons.find, html`Find &amp;<br />Select`)}
      </div>
      <div class="group wide">${this.big(icons.analyze, html`Analyze<br />Data`, "last", false)}</div>
    </div>`;
  }

  private renderCell(cell?: Cell) {
    if (!cell) return html`<td></td>`;
    return html`<td class=${cell.cls ?? ""}>${cell.text ?? nothing}${cell.selected ? html`<div class="cursor"></div>` : nothing}</td>`;
  }

  private renderSheet() {
    return html`<main class="sheet">
      <table>
        <colgroup>
          <col style="width:40px" />
          ${widths.map((w) => html`<col style="width:${w}px" />`)}
          <col />
        </colgroup>
        <thead>
          <tr>
            <th><svg class="corner" width="25" height="26" aria-hidden="true"><path d="M25 0v26H0z" fill="#565656" /></svg></th>
            ${columns.map((c) => html`<th class=${classMap({ on: c === "D" })}>${c}</th>`)}
          </tr>
        </thead>
        <tbody>
          ${rows.map(
            (r) => html`<tr style="height:${r.h}px">
              <th class=${classMap({ on: r.n === "17" })}>${r.n}</th>
              ${columns.map((c) => this.renderCell(r.cells?.[c]))}
            </tr>`,
          )}
        </tbody>
      </table>
    </main>`;
  }

  render() {
    return html`
      <header>${this.renderTitle()}${this.renderMenu()}${this.renderRibbon()}</header>
      <section class="notice">
        <b>Open recovered workbooks?</b><span>Your recent changes were saved. Do you want to continue working where you left off?</span>
        <div class="answers"><button>Yes</button><button>No</button></div>
      </section>
      <section class="formula">
        <div class="namebox">
          <input aria-label="Name box" value="D17" />
          <svg class="icon" width="14" height="38" aria-hidden="true"><path d="M7 0l7 12H0zM7 38l7-12H0z" fill="#b5b5b5" /></svg>
        </div>
        <div class="tools">
          <button aria-label="Cancel">${icons.cancel}</button><button aria-label="Enter">${icons.enter}</button><button class="serif fx" aria-label="Insert function">fx</button>
        </div>
        <input class="entry" aria-label="Formula" />
        <button class="expand" aria-label="Expand formula bar"><svg class="icon" width="14" height="12" aria-hidden="true"><path d="M0 0h14L7 12z" fill="#c9c9c9" /></svg></button>
      </section>
      <div class="band"></div>
      ${this.renderSheet()}
      <nav class="tabs">
        <div class="arrows">
          <svg class="icon" width="14" height="20" aria-hidden="true"><path d="M14 0v20L0 10z" fill="#6a6a6a" /></svg>
          <svg class="icon" width="14" height="20" aria-hidden="true"><path d="M0 0v20l14-10z" fill="#6a6a6a" /></svg>
        </div>
        <button class="tab info">Info Sheet</button>
        <button class="tab current">LG9_Project</button>
        <button class="add" aria-label="Add sheet"><svg class="icon" width="20" height="20" aria-hidden="true"><path d="M10 0v20M0 10h20" stroke="#bdbdbd" stroke-width="3" /></svg></button>
      </nav>
      <footer>
        <span class="state">Ready</span>
        <span class="access">${icons.access}Accessibility: Good to go</span>
        <div class="views">
          <button class="on" aria-label="Normal view">${icons.viewGrid}</button>
          <button aria-label="Page layout view">${icons.viewPage}</button>
          <button aria-label="Page break view">${icons.viewBreak}</button>
        </div>
        <div class="zoom">
          <button aria-label="Zoom out"><svg class="icon" width="16" height="16" aria-hidden="true"><path d="M0 8h16" stroke="#fff" stroke-width="4" /></svg></button>
          <input type="range" min="10" max="190" .value=${String(this.zoom)} aria-label="Zoom" @input=${(e: Event) => (this.zoom = Number((e.target as HTMLInputElement).value))} />
          <button aria-label="Zoom in"><svg class="icon" width="16" height="16" aria-hidden="true"><path d="M0 8h16M8 0v16" stroke="#fff" stroke-width="3" /></svg></button>
        </div>
        <span class="percent">${this.zoom}%</span>
      </footer>
    `;
  }
}
